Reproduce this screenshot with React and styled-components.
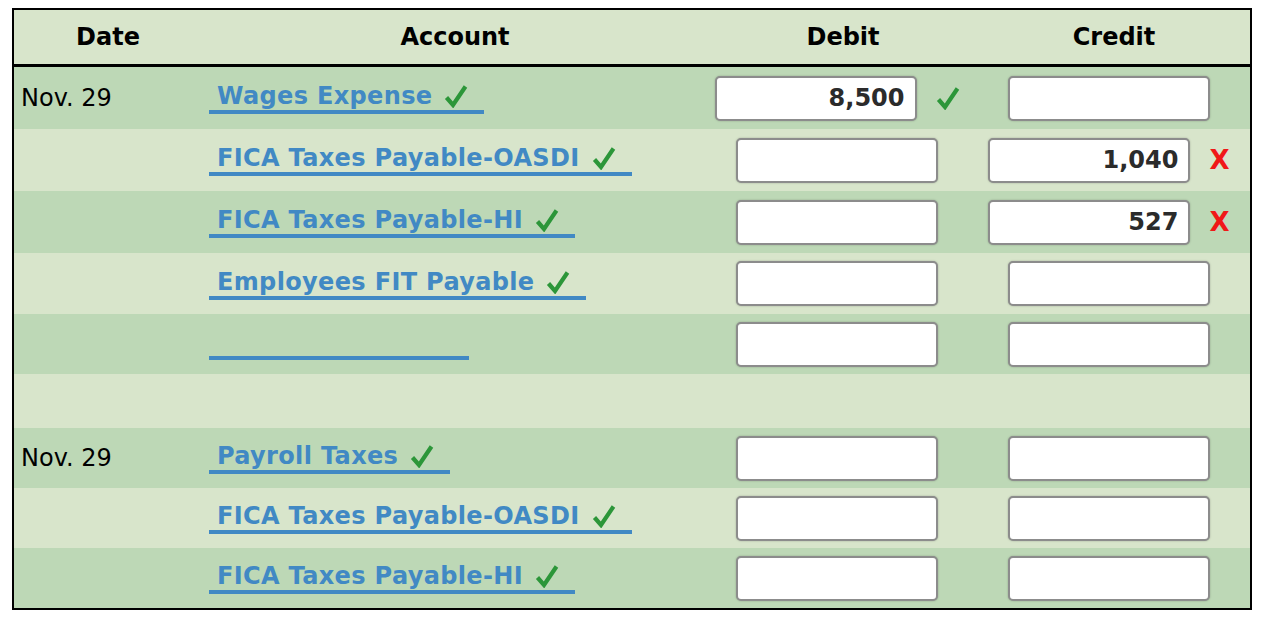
import React from "react";
import styled, { createGlobalStyle } from "styled-components";

const Global = createGlobalStyle`
  html, body { margin: 0; padding: 0; background: #ffffff; }
  body { font-family: "DejaVu Sans", Verdana, sans-serif; }
`;

const LIGHT = "#d8e5cb";
const DARK = "#bdd8b6";
const BLUE = "#4189c4";
const COLS = "186px 500px 274px 276px";

const Page = styled.div`
  padding: 8px 0 0 12px;
`;

const Table = styled.div`
  width: 1236px;
  border: 2px solid #000;
  background: ${LIGHT};
`;

const HeaderRow = styled.div`
  display: grid;
  grid-template-columns: ${COLS};
  height: 54px;
  border-bottom: 3px solid #000;
  background: ${LIGHT};
`;

const HeadCell = styled.div`
  display: flex;
  align-items: center;
  justify-content: center;
  padding-left: ${(p) => p.$shift || 0}px;
  font-weight: bold;
  font-size: 24px;
  color: #000;
`;

const Row = styled.div`
  display: grid;
  grid-template-columns: ${COLS};
  height: ${(p) => p.$h}px;
  background: ${(p) => (p.$dark ? DARK : LIGHT)};
`;

const DateCell = styled.div`
  display: flex;
  align-items: center;
  padding-left: 7px;
  font-size: 24px;
  color: #000;
`;

const AccountCell = styled.div`
  display: flex;
  align-items: center;
  padding-left: 9px;
`;

const AccountSelect = styled.div`
  display: flex;
  align-items: center;
  box-sizing: content-box;
  height: 28px;
  line-height: 28px;
  padding: 0 16px 0 8px;
  min-width: ${(p) => (p.$width ? `${p.$width - 24}px` : "0")};
  border-bottom: 4px solid ${BLUE};
  color: ${BLUE};
  font-weight: bold;
  font-size: 24px;
  letter-spacing: 0.35px;
  white-space: nowrap;
`;

const AccountMark = styled.span`
  display: inline-flex;
  margin-left: 12px;
`;

const AmountCell = styled.div`
  display: flex;
  align-items: center;
  justify-content: center;
  padding-right: ${(p) => p.$padRight || 0}px;
`;

const AmountInput = styled.div`
  box-sizing: border-box;
  width: 202px;
  height: 45px;
  background: #fff;
  border: 2px solid #8c8c8c;
  border-radius: 5px;
  box-shadow: 0 0 2px rgba(0, 0, 0, 0.25);
  display: flex;
  align-items: center;
  justify-content: flex-end;
  padding-right: 10px;
  font-weight: bold;
  font-size: 24px;
  color: #2b2b2b;
`;

const InputMark = styled.span`
  display: inline-flex;
  align-items: center;
  margin-left: 19px;
`;

const Cross = styled.span`
  color: #f01818;
  font-weight: bold;
  font-size: 26px;
  line-height: 1;
`;

const Check = () => (
  <svg width="24" height="24" viewBox="0 0 24 24" aria-hidden="true">
    <path
      d="M2.5 13.5 L9 21 L21.5 2.5"
      fill="none"
      stroke="#2c9639"
      strokeWidth="4.2"
      strokeLinejoin="miter"
      strokeLinecap="butt"
    />
  </svg>
);

const Mark = ({ kind }) =>
  kind === "ok" ? (
    <InputMark>
      <Check />
    </InputMark>
  ) : kind === "bad" ? (
    <InputMark>
      <Cross>X</Cross>
    </InputMark>
  ) : null;

const rows = [
  { date: "Nov. 29", account: "Wages Expense", debit: "8,500", debitMark: "ok", h: 62, dark: true },
  { account: "FICA Taxes Payable-OASDI", credit: "1,040", creditMark: "bad", h: 62 },
  { account: "FICA Taxes Payable-HI", credit: "527", creditMark: "bad", h: 62, dark: true },
  { account: "Employees FIT Payable", h: 61 },
  { account: "", h: 60, dark: true, empty: true },
  { blank: true, h: 54 },
  { date: "Nov. 29", account: "Payroll Taxes", h: 60, dark: true },
  { account: "FICA Taxes Payable-OASDI", h: 60 },
  { account: "FICA Taxes Payable-HI", h: 60, dark: true },
];

export default function App() {
  return (
    <>
      <Global />
      <Page>
        <Table>
          <HeaderRow>
            <HeadCell $shift={2}>Date</HeadCell>
            <HeadCell $shift={10}>Account</HeadCell>
            <HeadCell $shift={12}>Debit</HeadCell>
            <HeadCell $shift={4}>Credit</HeadCell>
          </HeaderRow>
          {rows.map((r, i) =>
            r.blank ? (
              <Row key={i} $h={r.h} $dark={r.dark} />
            ) : (
              <Row key={i} $h={r.h} $dark={r.dark}>
                <DateCell>{r.date || ""}</DateCell>
                <AccountCell>
                  {r.empty ? (
                    <AccountSelect $width={260} />
                  ) : (
                    <AccountSelect>
                      {r.account}
                      <AccountMark>
                        <Check />
                      </AccountMark>
                    </AccountSelect>
                  )}
                </AccountCell>
                <AmountCell>
                  <AmountInput>{r.debit || ""}</AmountInput>
                  <Mark kind={r.debitMark} />
                </AmountCell>
                <AmountCell $padRight={6}>
                  <AmountInput>{r.credit || ""}</AmountInput>
                  <Mark kind={r.creditMark} />
                </AmountCell>
              </Row>
            )
          )}
        </Table>
      </Page>
    </>
  );
}
